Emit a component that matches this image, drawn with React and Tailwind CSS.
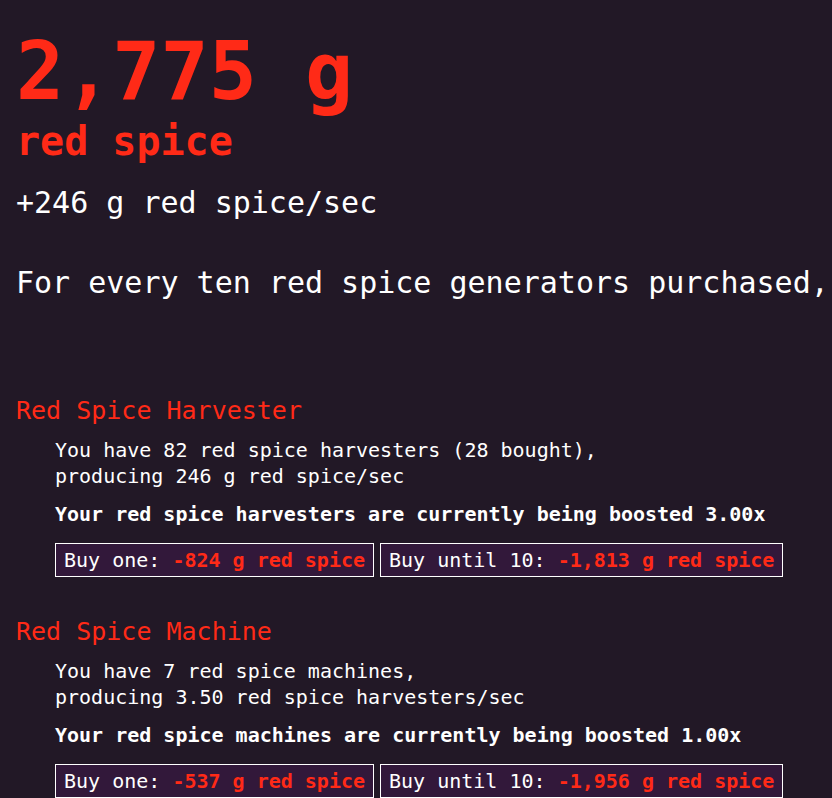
import React from "react";

// Générateurs de red spice
const generateurs = [
  {
    nom: "Red Spice Harvester",
    lignes: ["You have 82 red spice harvesters (28 bought),", "producing 246 g red spice/sec"],
    boost: "Your red spice harvesters are currently being boosted 3.00x",
    un: "-824 g red spice",
    dix: "-1,813 g red spice",
  },
  {
    nom: "Red Spice Machine",
    lignes: ["You have 7 red spice machines,", "producing 3.50 red spice harvesters/sec"],
    boost: "Your red spice machines are currently being boosted 1.00x",
    un: "-537 g red spice",
    dix: "-1,956 g red spice",
  },
];

const BoutonAchat = ({ label, cout }) => (
  <button className="border border-white bg-[#32183a] px-2 py-[3px] text-[20px] leading-[26px] text-white whitespace-nowrap">
    {label} <span className="font-bold text-[#ff2a17]">{cout}</span>
  </button>
);

const App = () => {
  return (
    <div
      className="min-h-screen w-full overflow-hidden bg-[#221826] px-4 pt-[32px] pb-10 text-white"
      style={{ fontFamily: '"DejaVu Sans Mono", "Liberation Mono", monospace' }}
    >
      {/* Total */}
      <h1 className="text-[80px] font-bold leading-[80px] text-[#ff2a17]">2,775 g</h1>
      <h2 className="mt-[7px] text-[40px] font-bold leading-[44px] text-[#ff2a17]">red spice</h2>
      <p className="mt-[22px] text-[30px] leading-[36px]">+246 g red spice/sec</p>
      <p className="mt-[44px] whitespace-nowrap text-[30px] leading-[36px]">
        For every ten red spice generators purchased,
      </p>

      {/* Liste des générateurs */}
      <div className="mt-[95px] flex flex-col gap-[40px]">
        {generateurs.map((g) => (
          <div key={g.nom}>
            <h3 className="text-[25px] leading-[30px] text-[#ff2a17]">{g.nom}</h3>
            <div className="mt-[11px] pl-[39px]">
              <p className="text-[20px] leading-[26px]">
                {g.lignes[0]}
                <br />
                {g.lignes[1]}
              </p>
              <p className="mt-[12px] text-[20px] font-bold leading-[26px]">{g.boost}</p>
              <div className="mt-[16px] flex gap-1.5">
                <BoutonAchat label="Buy one:" cout={g.un} />
                <BoutonAchat label="Buy until 10:" cout={g.dix} />
              </div>
            </div>
          </div>
        ))}
      </div>
    </div>
  );
};

export default App;
